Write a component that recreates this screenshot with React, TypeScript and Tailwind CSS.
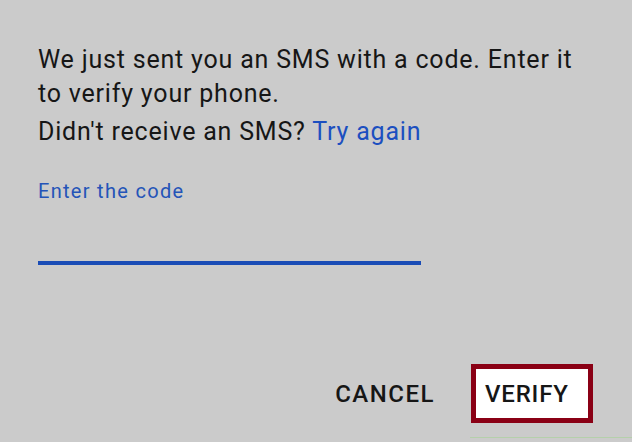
import React from 'react';

const App = () => {
  return (
    <div
      className="w-[632px] h-[442px] bg-[#cbcbcb] overflow-hidden flex flex-col"
      style={{ fontFamily: 'Roboto, "Liberation Sans", sans-serif' }}
    >
      {/* Message */}
      <div className="pl-[38px] pt-[43px] text-[25px] leading-[34px] tracking-[0.8px] text-[#161616]">
        <p>
          We just sent you an SMS with a code. Enter it
          <br />
          to verify your phone.
        </p>
        <p className="mt-1">
          Didn't receive an SMS? <span className="text-[#1c4fc0]">Try again</span>
        </p>
      </div>

      {/* Code input */}
      <div className="pl-[38px] mt-[30px]">
        <label className="block text-[20px] leading-[24px] tracking-[1.3px] text-[#2454b8]">Enter the code</label>
        <div className="mt-[58px] w-[383px] h-[4px] bg-[#1a4cb6]"></div>
      </div>

      {/* Actions */}
      <div className="flex items-center justify-end gap-[36px] pr-[39px] mt-[99px]">
        <button className="text-[24px] font-medium tracking-[1.5px] text-[#161616]">CANCEL</button>
        <button className="w-[122px] h-[59px] border-[5px] border-[#8a0015] bg-white flex items-center pl-[9px] text-[24px] font-medium tracking-[0.8px] text-[#161616]">
          VERIFY
        </button>
      </div>
      <div className="mt-[14px] ml-auto w-[162px] h-[1px] bg-[#b5d0ab]"></div>
    </div>
  );
};

export default App;
